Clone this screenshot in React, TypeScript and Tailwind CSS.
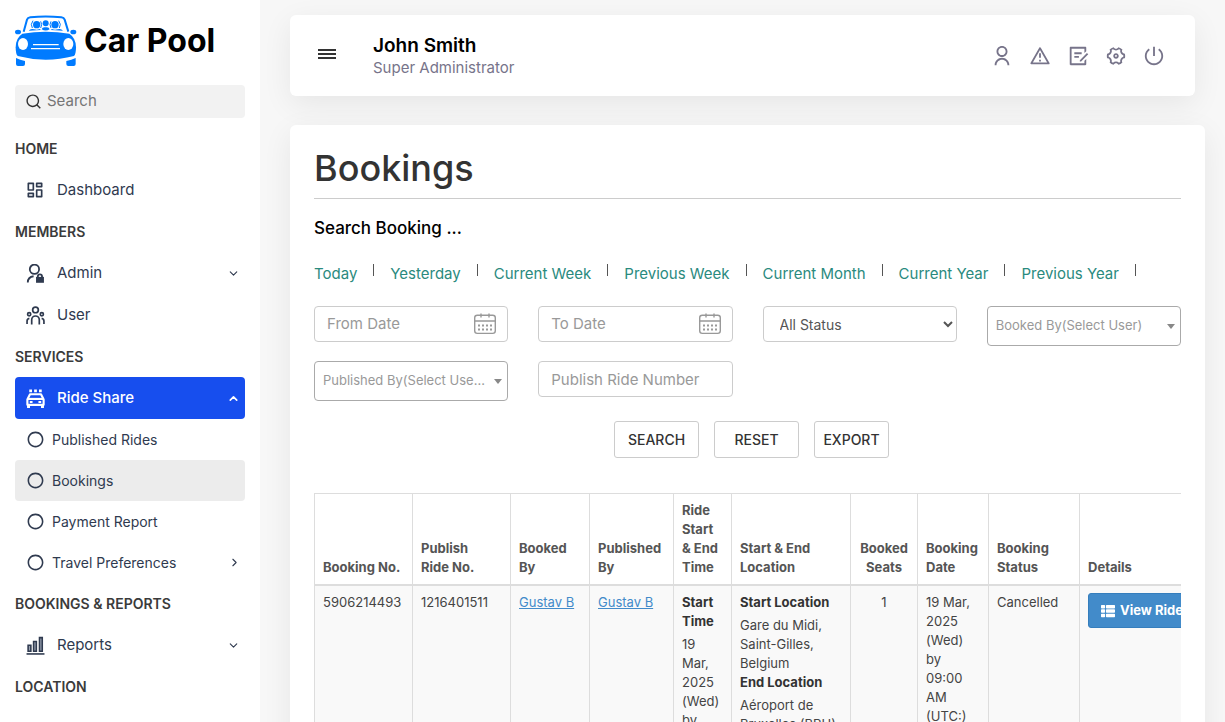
import type { ReactNode } from 'react'
import {
  RiAlertLine,
  RiCheckboxBlankCircleLine,
  RiDashboardLine,
  RiDraftLine,
  RiSearchLine,
  RiSettings4Line,
  RiShutDownLine,
  RiUserLine,
} from 'react-icons/ri'
import { FaThList } from 'react-icons/fa'
import { ChevronDown, ChevronRight, ChevronUp } from 'lucide-react'

function CarLogo() {
  return (
    <svg viewBox="45 45 186 156" className="h-[52px] w-[62px] shrink-0" fill="#007bff" aria-hidden="true">
      <path d="M71 95 81 59Q83 53 91 52Q137 47 184 52Q192 53 194 59L205 95" fill="none" stroke="#007bff" strokeWidth="6" />
      <circle cx="110" cy="74" r="11" />
      <circle cx="137" cy="70" r="9" />
      <circle cx="165" cy="74" r="11" />
      <path d="M99 62Q90 73 97 84M176 62Q185 73 178 84M122 64Q128 74 122 84M153 64Q147 74 153 84" fill="none" stroke="#007bff" strokeWidth="3" />
      <path d="M86 92Q92 85 102 88Q111 91 119 87L123 90ZM125 88Q127 80 137 82Q147 80 149 88Q137 95 125 88ZM152 90 156 87Q164 91 173 88Q183 85 189 92Z" />
      <path d="M67 101Q137 90 208 101Q228 114 228 142Q228 162 222 168Q180 179 137 179Q95 179 53 168Q47 162 47 142Q47 114 67 101Z" />
      <ellipse cx="54" cy="96" rx="9" ry="7" />
      <ellipse cx="220" cy="96" rx="9" ry="7" />
      <path d="M48 174Q60 180 75 183V192Q75 198 69 198H54Q48 198 48 192ZM227 174Q215 180 199 183V192Q199 198 205 198H221Q227 198 227 192Z" />
      <ellipse cx="69" cy="132" rx="15" ry="18" fill="#fff" />
      <ellipse cx="205" cy="132" rx="15" ry="18" fill="#fff" />
      <path d="M99 134H176M93 146H180" stroke="#fff" strokeWidth="4" />
    </svg>
  )
}

function AdminIcon() {
  return (
    <svg viewBox="0 0 18 18" width="19" height="19" fill="none" stroke="currentColor" strokeWidth="1.7">
      <circle cx="8" cy="5" r="4.4" />
      <path d="M1.7 17.5C1.7 14 4 12 7.2 11.6" />
      <path d="M9.5 12.2h7.5v5.6H9.5z" fill="currentColor" stroke="none" />
      <path d="M11.2 12.8v-1a2 2 0 0 1 4 0v1" />
    </svg>
  )
}

function UsersIcon() {
  return (
    <svg viewBox="0 0 18 18" width="19" height="19" fill="none" stroke="currentColor" strokeWidth="1.6">
      <circle cx="9" cy="3.7" r="2.7" />
      <circle cx="3" cy="7.8" r="1.5" />
      <circle cx="15" cy="7.8" r="1.5" />
      <path d="M5.4 17.5v-4.4a3.6 3.6 0 0 1 7.2 0v4.4M1 17v-2.6a2.6 2.6 0 0 1 2.2-2.6M17 17v-2.6a2.6 2.6 0 0 0-2.2-2.6" />
    </svg>
  )
}

function TaxiIcon() {
  return (
    <svg viewBox="0 0 18 18" width="19" height="19" fill="none" stroke="currentColor" strokeWidth="2">
      <path d="M4.4 .5v2.6M9 .5v2.6M13.6 .5v2.6" strokeWidth="2.6" />
      <path d="M1.3 10 3.8 5h10.4l2.5 5v5H1.3z" strokeLinejoin="round" />
      <path d="M1.3 9.4h15.4" />
      <path d="M2.4 15v3M15.6 15v3" strokeWidth="2.8" />
      <path d="M3.6 12.3h2.6M11.8 12.3h2.6" />
    </svg>
  )
}

function ReportsIcon() {
  return (
    <svg viewBox="0 0 18 18" width="19" height="19" fill="none" stroke="currentColor" strokeWidth="1.5">
      <path d="M2 8.7h2.6v5.8H2zM7.2 5.2h2.6v9.3H7.2zM12.8 1.5h2.6v13h-2.6z" fill="#9aa3b2" />
      <path d="M.5 17h17" />
    </svg>
  )
}

function CalendarIcon() {
  return (
    <svg viewBox="0 0 24 24" width="24" height="24" className="shrink-0" fill="none" stroke="#999" strokeWidth="1.4" aria-hidden="true">
      <rect x="1.7" y="3.2" width="20.6" height="18.2" rx="2.6" />
      <path d="M1.7 9h20.6M8 1.4v4M16 1.4v4" />
      <path d="M5 13.5h14M5 17.5h14" strokeWidth="2" strokeDasharray="2 2" />
    </svg>
  )
}

function SectionTitle({ children }: { children: ReactNode }) {
  return <h2 className="flex h-[41px] items-center text-sm font-semibold text-[#3b3b3b]">{children}</h2>
}

type NavItemProps = {
  icon: ReactNode
  label: string
  active?: boolean
  arrow?: ReactNode
}

function NavItem({ icon, label, active, arrow }: NavItemProps) {
  return (
    <a
      href="#"
      className={`flex h-[42px] items-center rounded pl-[10px] pr-[5px] text-[15px] ${
        active ? 'bg-[#174eee] font-medium text-white' : 'text-[#2f3a4f]'
      }`}
    >
      <span className="mr-3 flex w-5 justify-center">{icon}</span>
      <span className="grow">{label}</span>
      {arrow}
    </a>
  )
}

function SubItem({ label, active, arrow }: { label: string; active?: boolean; arrow?: ReactNode }) {
  return (
    <a
      href="#"
      className={`flex h-[41px] items-center gap-[7px] rounded pl-[11px] pr-1 text-sm text-[#2f3a4f] ${
        active ? 'bg-[#ececec]' : ''
      }`}
    >
      <RiCheckboxBlankCircleLine size={19} />
      <span className="grow">{label}</span>
      {arrow}
    </a>
  )
}

function Sidebar() {
  return (
    <aside className="w-[260px] shrink-0 overflow-hidden bg-white px-[15px] pt-[15px]">
      <a href="#" className="flex h-[52px] items-center gap-[7px]">
        <CarLogo />
        <span className="text-[32px] font-bold text-black">Car Pool</span>
      </a>
      <label className="mt-[18px] mb-[10px] flex h-[33px] items-center gap-[5px] rounded bg-[#f2f2f2] px-[10px]">
        <RiSearchLine size={17} className="shrink-0 text-[#333]" />
        <input type="text" placeholder="Search" aria-label="Search" className="w-full bg-transparent text-[15px] outline-none placeholder:text-[#757575]" />
      </label>
      <nav>
        <SectionTitle>HOME</SectionTitle>
        <NavItem icon={<RiDashboardLine size={20} />} label="Dashboard" />
        <SectionTitle>MEMBERS</SectionTitle>
        <NavItem icon={<AdminIcon />} label="Admin" arrow={<ChevronDown size={13} />} />
        <NavItem icon={<UsersIcon />} label="User" />
        <SectionTitle>SERVICES</SectionTitle>
        <NavItem icon={<TaxiIcon />} label="Ride Share" active arrow={<ChevronUp size={13} strokeWidth={3} />} />
        <SubItem label="Published Rides" />
        <SubItem label="Bookings" active />
        <SubItem label="Payment Report" />
        <SubItem label="Travel Preferences" arrow={<ChevronRight size={13} />} />
        <SectionTitle>BOOKINGS &amp; REPORTS</SectionTitle>
        <NavItem icon={<ReportsIcon />} label="Reports" arrow={<ChevronDown size={13} />} />
        <SectionTitle>LOCATION</SectionTitle>
      </nav>
    </aside>
  )
}

function Header() {
  return (
    <header className="mr-[10px] flex h-[81px] items-center rounded-md bg-white pl-7 pr-[30px] shadow-[0_8px_30px_rgba(0,0,0,0.07)]">
      <button type="button" aria-label="Toggle menu" className="mr-[37px] mb-1 flex w-[18px] flex-col gap-[2px]">
        <span className="h-[2px] bg-[#333]" />
        <span className="h-[2px] bg-[#333]" />
        <span className="h-[2px] bg-[#333]" />
      </button>
      <div className="grow">
        <div className="text-[19px] leading-6 font-semibold text-black">John Smith</div>
        <div className="text-[15px] leading-5 text-[#77748a]">Super Administrator</div>
      </div>
      <div className="flex gap-4 text-[#77748a]">
        <a href="#" aria-label="Profile"><RiUserLine size={22} /></a>
        <a href="#" aria-label="Alerts"><RiAlertLine size={22} /></a>
        <a href="#" aria-label="Requests"><RiDraftLine size={22} /></a>
        <a href="#" aria-label="Settings"><RiSettings4Line size={22} /></a>
        <a href="#" aria-label="Log out"><RiShutDownLine size={22} /></a>
      </div>
    </header>
  )
}

const ranges = ['Today', 'Yesterday', 'Current Week', 'Previous Week', 'Current Month', 'Current Year', 'Previous Year']

function DateField({ label }: { label: string }) {
  return (
    <label className="flex h-9 items-center rounded border border-[#ccc] pl-3 pr-[10px]">
      <input type="text" placeholder={label} aria-label={label} className="w-full min-w-0 text-[15px] outline-none placeholder:text-[#999]" />
      <CalendarIcon />
    </label>
  )
}

function UserSelect({ label }: { label: string }) {
  return (
    <div className="relative">
      <select aria-label={label} className="h-10 w-full appearance-none rounded border border-[#aaa] bg-white pl-2 pr-5 text-[13px] text-[#999]">
        <option>{label}</option>
      </select>
      <span className="pointer-events-none absolute top-[18px] right-[6px] border-x-4 border-t-[5px] border-x-transparent border-t-[#888]" />
    </div>
  )
}

function Filters() {
  return (
    <form>
      <div className="grid grid-cols-4 items-start gap-x-[30px] gap-y-[15px]">
        <DateField label="From Date" />
        <DateField label="To Date" />
        <select aria-label="Status" className="h-9 w-full rounded border border-[#ccc] bg-white px-3 text-sm text-[#555]">
          <option>All Status</option>
        </select>
        <UserSelect label="Booked By(Select User)" />
        <UserSelect label="Published By(Select Use…" />
        <input
          type="text"
          placeholder="Publish Ride Number"
          aria-label="Publish Ride Number"
          className="h-9 w-full rounded border border-[#ccc] px-3 text-[15px] outline-none placeholder:text-[#999]"
        />
      </div>
      <div className="mt-5 flex justify-center gap-[15px] pl-2 text-sm font-medium text-[#333]">
        <button type="button" className="h-[37px] w-[85px] rounded-[3px] border border-[#ccc]">SEARCH</button>
        <button type="button" className="h-[37px] w-[85px] rounded-[3px] border border-[#ccc]">RESET</button>
        <button type="button" className="h-[37px] w-[75px] rounded-[3px] border border-[#ccc]">EXPORT</button>
      </div>
    </form>
  )
}

function BookingsTable() {
  const th = 'border border-[#ddd] border-b-2 px-2 py-[7px] text-left align-bottom font-bold text-[#555]'
  const td = 'border border-[#ddd] px-2 py-[7px] align-top'
  return (
    <div className="mt-[35px] overflow-hidden">
      <table className="w-[915px] table-fixed border-collapse text-[13px] leading-[19px] text-[#444]">
        <colgroup>
          <col className="w-[98px]" />
          <col className="w-[98px]" />
          <col className="w-[79px]" />
          <col className="w-[84px]" />
          <col className="w-[58px]" />
          <col className="w-[119px]" />
          <col className="w-[67px]" />
          <col className="w-[71px]" />
          <col className="w-[91px]" />
          <col />
        </colgroup>
        <thead>
          <tr>
            <th className={th}>Booking No.</th>
            <th className={th}>Publish<br />Ride No.</th>
            <th className={th}>Booked By</th>
            <th className={th}>Published By</th>
            <th className={th}>Ride Start<br />&amp; End Time</th>
            <th className={th}>Start &amp; End Location</th>
            <th className="border border-[#ddd] border-b-2 px-2 py-[7px] text-center align-bottom font-bold text-[#555]">Booked Seats</th>
            <th className={th}>Booking Date</th>
            <th className={th}>Booking Status</th>
            <th className={th}>Details</th>
          </tr>
        </thead>
        <tbody>
          <tr className="bg-[#f9f9f9]">
            <td className={td}>5906214493</td>
            <td className={td}>1216401511</td>
            <td className={td}><a href="#" className="text-[#428bca] underline">Gustav B</a></td>
            <td className={td}><a href="#" className="text-[#428bca] underline">Gustav B</a></td>
            <td className={td}>
              <b className="mb-1 block text-[#333]">Start Time</b>
              19<br />Mar,<br />2025<br />(Wed)<br />by
            </td>
            <td className={td}>
              <b className="mb-1 block text-[#333]">Start Location</b>
              Gare du Midi,<br />Saint-Gilles,<br />Belgium
              <b className="mb-1 block text-[#333]">End Location</b>
              Aéroport de<br />Bruxelles (BRU)
            </td>
            <td className="border border-[#ddd] px-2 py-[7px] text-center align-top">1</td>
            <td className={td}>19 Mar,<br />2025<br />(Wed)<br />by<br />09:00<br />AM<br />(UTC:)</td>
            <td className={td}>Cancelled</td>
            <td className={td}>
              <button type="button" className="flex h-[35px] items-center gap-[5px] rounded-[3px] border border-[#357ebd] bg-[#428bca] px-3 font-bold whitespace-nowrap text-white">
                <FaThList size={14} />
                View Ride
              </button>
            </td>
          </tr>
        </tbody>
      </table>
    </div>
  )
}

export default function App() {
  return (
    <div className="flex h-screen overflow-hidden bg-[#f7f7f7] font-[Inter,sans-serif]">
      <Sidebar />
      <main className="min-w-0 grow pt-[15px] pr-5 pl-[30px]">
        <Header />
        <section className="mt-[29px] min-h-full rounded-md bg-white px-6 pt-5 shadow-[0_8px_30px_rgba(0,0,0,0.07)]">
          <h1 className="border-b border-[#ccc] pb-[7px] text-4xl leading-[46px] font-medium text-[#333]">Bookings</h1>
          <h3 className="mt-[17px] text-[17px] leading-6 font-medium text-black">Search Booking ...</h3>
          <ul className="mt-6 mb-[22px] flex gap-4 text-[15px] leading-5 text-[#2a8a7e]">
            {ranges.map((range) => (
              <li key={range} className="flex gap-4 whitespace-nowrap">
                <a href="#">{range}</a>
                <span className="h-3 w-px bg-[#555]" />
              </li>
            ))}
          </ul>
          <Filters />
          <BookingsTable />
        </section>
      </main>
    </div>
  )
}
